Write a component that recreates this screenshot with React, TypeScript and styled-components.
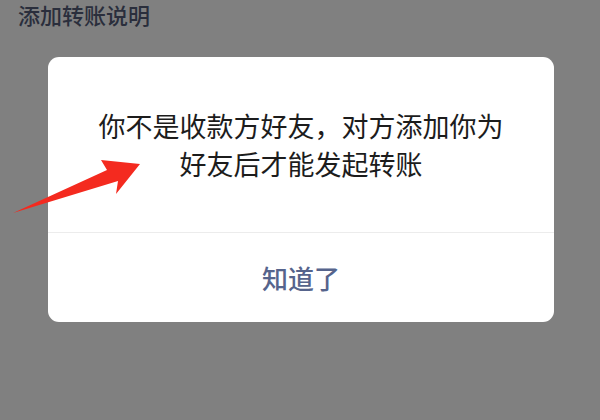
import styled, { createGlobalStyle } from 'styled-components';

const GlobalStyle = createGlobalStyle`
  html, body {
    margin: 0;
    padding: 0;
    background: #808080;
  }
  body {
    font-family: "Noto Sans CJK SC", "Noto Sans", sans-serif;
  }
`;

const Screen = styled.div`
  position: relative;
  width: 600px;
  height: 420px;
  overflow: hidden;
  background: #808080;
  display: flex;
  flex-direction: column;
`;

const PageTitle = styled.div`
  padding: 0 0 0 18px;
  height: 57px;
  font-size: 22px;
  font-weight: 500;
  line-height: 28px;
  color: #2a2e3c;
`;

const Dialog = styled.div`
  margin-left: 48px;
  width: 506px;
  background: #ffffff;
  border-radius: 11px;
  display: flex;
  flex-direction: column;
  overflow: hidden;
`;

const Message = styled.div`
  height: 176px;
  display: flex;
  align-items: center;
  justify-content: center;
  padding: 0 30px;
  box-sizing: border-box;
  text-align: center;
  font-size: 27px;
  line-height: 38px;
  color: #1c1c1c;
  border-bottom: 1px solid #ececec;
`;

const Action = styled.button`
  height: 89px;
  border: none;
  background: transparent;
  font-family: inherit;
  font-size: 26px;
  font-weight: 500;
  color: #56648c;
  padding: 0;
  cursor: pointer;
`;

const ArrowMark = styled.svg`
  position: absolute;
  left: 0;
  top: 0;
  pointer-events: none;
`;

export default function App() {
  return (
    <>
      <GlobalStyle />
      <Screen>
        <PageTitle>添加转账说明</PageTitle>
        <Dialog>
          <Message>
            你不是收款方好友，对方添加你为
            <br />
            好友后才能发起转账
          </Message>
          <Action>知道了</Action>
        </Dialog>
        <ArrowMark width="600" height="420" viewBox="0 0 600 420">
          <polygon
            points="13,213 107,170 101,160 140,164 116,194 118,181"
            fill="#f42a1f"
          />
        </ArrowMark>
      </Screen>
    </>
  );
}
